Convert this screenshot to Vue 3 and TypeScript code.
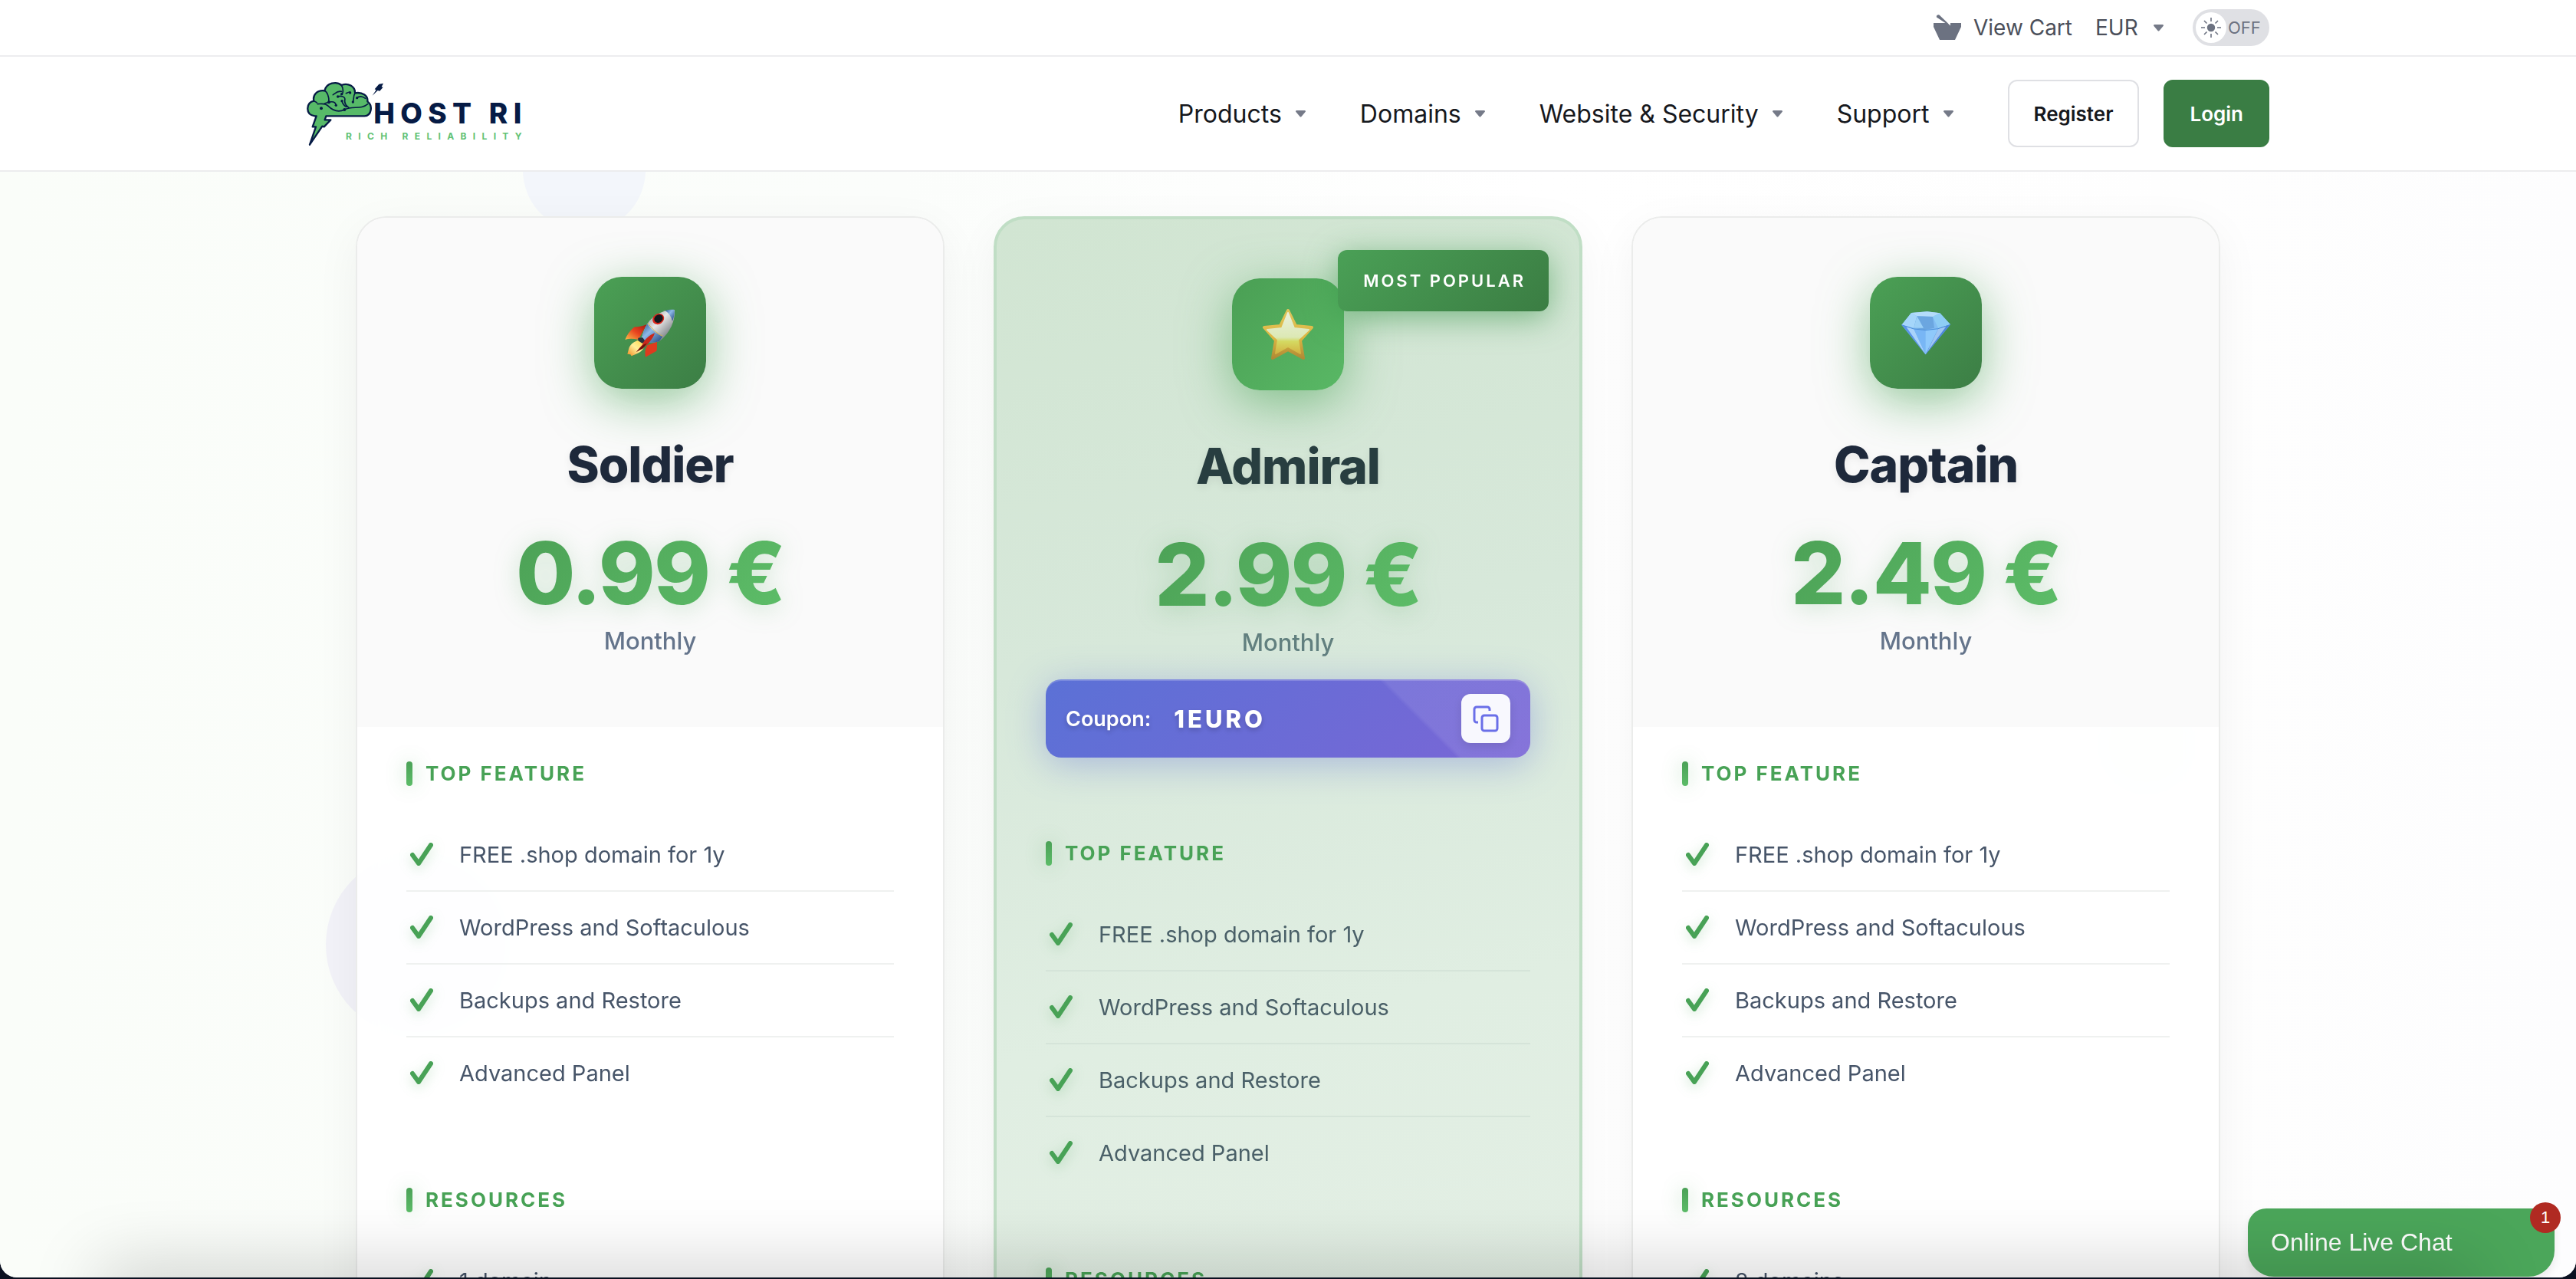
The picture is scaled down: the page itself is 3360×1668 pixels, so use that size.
<script setup lang="ts">
import { ref } from 'vue'

interface Plan {
  name: string
  price: string
  icon: 'rocket' | 'star' | 'diamond'
  featured?: boolean
  coupon?: string
  sections: { title: string; items: string[] }[]
}

const perks = ['FREE .shop domain for 1y', 'WordPress and Softaculous', 'Backups and Restore', 'Advanced Panel']

const menu = ['Products', 'Domains', 'Website & Security', 'Support']

const plans: Plan[] = [
  {
    name: 'Soldier',
    price: '0.99 €',
    icon: 'rocket',
    sections: [
      { title: 'Top Feature', items: perks },
      { title: 'Resources', items: ['1 domain'] },
    ],
  },
  {
    name: 'Admiral',
    price: '2.99 €',
    icon: 'star',
    featured: true,
    coupon: '1EURO',
    sections: [
      { title: 'Top Feature', items: perks },
      { title: 'Resources', items: [] },
    ],
  },
  {
    name: 'Captain',
    price: '2.49 €',
    icon: 'diamond',
    sections: [
      { title: 'Top Feature', items: perks },
      { title: 'Resources', items: ['2 domains'] },
    ],
  },
]

const currency = ref('EUR')
const dark = ref(false)

function copyCoupon(code: string) {
  navigator.clipboard?.writeText(code)
}
</script>

<template>
  <div class="frame">
    <div class="page">
      <div class="topbar">
        <div class="container topbar-row">
          <a href="#" class="cart">
            <svg width="36" height="34" viewBox="0 0 36 34" aria-hidden="true">
              <path d="M0 11h15.500L4 3.500A2.500 2.500 0 0 1 7.500 .5L22 14.500V11h14v5l-8 17H8L0 16z" fill="#6c7281" />
            </svg>
            <span>View Cart</span>
          </a>
          <label class="currency">
            <select v-model="currency" aria-label="Currency">
              <option>EUR</option>
            </select>
            <svg class="caret" width="13" height="9" viewBox="0 0 13 9" aria-hidden="true"><path d="M1 0h11q1 0 1 1.500L7.500 8q-1 1-2 0L0 1.500Q0 0 1 0z" /></svg>
          </label>
          <label class="toggle">
            <input v-model="dark" type="checkbox" aria-label="Dark mode" />
            <span class="knob">
              <svg width="26" height="26" viewBox="0 0 26 26" aria-hidden="true">
                <circle cx="13" cy="13" r="5.200" fill="#6c7281" />
                <path d="M13 0v5M13 21v5M0 13h5M21 13h5M4 4l3.500 3.500M18.500 18.500 22 22M4 22l3.500-3.500M18.500 7.500 22 4" stroke="#6c7281" stroke-width="1.600" />
              </svg>
            </span>
            <span>OFF</span>
          </label>
        </div>
      </div>

      <header class="navbar">
        <div class="container nav-row">
          <a href="#" class="logo" aria-label="Host RI">
            <svg width="290" height="87" viewBox="60 42 870 261">
              <g stroke="#061b45" stroke-width="7" stroke-linejoin="round" stroke-linecap="round">
                <path d="M92 181C70 178 63 165 64 150C65 133 74 125 88 122C83 98 101 78 130 82C137 50 177 44 196 60C222 50 250 64 249 91C277 86 301 101 298 124C320 140 314 180 286 181H136L131 196H154L128 223L121 221L72 293L96 223H83L98 181Z" fill="#57ba68" />
                <g fill="none" stroke-width="5">
                  <path d="M88 122C94 124 97 125 100 129M130 82C140 86 148 105 147 126M103 134C118 133 132 130 142 140C160 158 181 170 208 156C240 139 272 158 299 134" />
                  <path d="M130 132C146 126 172 118 175 139M163 98C172 92 180 82 196 85M182 105C197 100 213 106 209 120C208 131 215 141 225 148M196 60C203 72 205 90 197 96M214 92C224 88 232 84 230 90M249 91C241 105 246 115 241 126M256 110C265 103 278 103 290 112M198 122C202 137 208 141 215 145" />
                </g>
              </g>
              <g fill="#061b45">
                <circle cx="117" cy="151" r="6" /><circle cx="147" cy="127" r="6" /><circle cx="175" cy="139" r="5" />
                <circle cx="182" cy="105" r="5" /><circle cx="198" cy="122" r="5" /><circle cx="230" cy="90" r="5" />
                <circle cx="241" cy="126" r="5" /><circle cx="257" cy="110" r="5" /><circle cx="208" cy="156" r="6" /><circle cx="197" cy="95" r="5" />
                <path d="M343 56l17-3-7 14 6 1-13 15-8-2-21 20 15-22-6-3z" />
              </g>
              <text x="322" y="210" font-size="111" font-weight="800" letter-spacing="22" fill="#061b45">HOST RI</text>
              <text x="213" y="273" font-size="36" font-weight="700" letter-spacing="25" fill="#62c274">RICH RELIABILITY</text>
            </svg>
          </a>
          <div class="nav-right">
            <nav class="menu">
              <button v-for="item in menu" :key="item" type="button" class="menu-item" aria-haspopup="true">
                {{ item }}
                <svg class="caret" width="13" height="9" viewBox="0 0 13 9" aria-hidden="true"><path d="M1 0h11q1 0 1 1.500L7.500 8q-1 1-2 0L0 1.500Q0 0 1 0z" /></svg>
              </button>
            </nav>
            <div class="auth">
              <button type="button" class="btn btn-outline">Register</button>
              <button type="button" class="btn btn-solid">Login</button>
            </div>
          </div>
        </div>
      </header>

      <main class="hero">
        <div class="container plans">
          <span class="bubble bubble-blue"></span>
          <span class="bubble bubble-violet"></span>
          <span class="bubble bubble-green"></span>
          <article v-for="plan in plans" :key="plan.name" class="card" :class="{ featured: plan.featured }">
            <span v-if="plan.featured" class="ribbon">MOST POPULAR</span>
            <div class="card-head">
              <div class="tile">
                <svg v-if="plan.icon === 'rocket'" width="70" height="65" viewBox="40 35 210 195" aria-hidden="true">
                  <defs>
                    <linearGradient id="hull" x1="0" y1="0" x2="1" y2="1">
                      <stop offset=".15" stop-color="#8d949d" /><stop offset=".45" stop-color="#e6e6e6" /><stop offset=".75" stop-color="#8b8f94" /><stop offset="1" stop-color="#444b55" />
                    </linearGradient>
                    <linearGradient id="band" x1="0" y1="0" x2="1" y2="1">
                      <stop offset="0" stop-color="#2c5792" /><stop offset=".4" stop-color="#8db9e8" /><stop offset="1" stop-color="#1d3f78" />
                    </linearGradient>
                    <linearGradient id="fin" x1="1" y1="0" x2="0" y2="1">
                      <stop offset="0" stop-color="#a51a12" /><stop offset=".5" stop-color="#e8431f" /><stop offset="1" stop-color="#fbc04a" />
                    </linearGradient>
                    <linearGradient id="flame" x1="1" y1="0" x2="0" y2="1">
                      <stop offset="0" stop-color="#ffd43a" /><stop offset=".5" stop-color="#fff09a" /><stop offset="1" stop-color="#f08a1d" />
                    </linearGradient>
                  </defs>
                  <path d="M132 98C112 108 96 106 82 109C66 122 54 140 47 158C62 153 80 154 99 158Z" fill="url(#fin)" />
                  <path d="M172 166C171 180 173 192 170 202L127 226C124 210 124 198 134 180Z" fill="#df3a1e" />
                  <path d="M100 160C84 164 66 176 62 192L56 214L68 216L72 222L90 214C108 208 120 196 125 176Z" fill="url(#flame)" />
                  <path d="M134 96C156 62 196 40 240 41C244 80 226 130 180 165C160 170 140 172 122 168L112 152C116 134 124 112 134 96Z" fill="url(#hull)" />
                  <path d="M134 96C124 112 116 134 112 152L122 168C142 172 160 170 180 165L194 146C170 136 148 116 134 96Z" fill="url(#band)" />
                  <path d="M204 44C216 41 230 40 240 41C242 56 238 72 232 86C228 68 218 54 204 44Z" fill="url(#band)" />
                  <path d="M136 92C150 114 172 134 194 144" fill="none" stroke="#d2ad45" stroke-width="3" />
                  <ellipse cx="177" cy="77" rx="24" ry="20" transform="rotate(-35 177 77)" fill="#d9261c" />
                  <ellipse cx="178" cy="76" rx="18" ry="15" transform="rotate(-35 178 76)" fill="#14171d" />
                  <path d="M98 151L116 150L126 164L114 172L98 162Z" fill="#26313f" />
                  <path d="M163 132C142 140 122 158 114 178L91 206C108 194 130 186 142 168C152 156 160 144 163 132Z" fill="#c8281b" />
                  <path d="M91 206C104 190 116 176 132 172L118 192Z" fill="#6b100d" />
                </svg>
                <svg v-else-if="plan.icon === 'star'" width="70" height="66" viewBox="0 0 70 66" aria-hidden="true">
                  <defs>
                    <linearGradient id="gold" x1="0" y1="0" x2="0" y2="1">
                      <stop offset="0" stop-color="#dcc45c" /><stop offset=".55" stop-color="#dfb843" /><stop offset="1" stop-color="#b08a35" />
                    </linearGradient>
                    <linearGradient id="shine" x1="0" y1="0" x2="0" y2="1">
                      <stop offset="0" stop-color="#e9f0dc" /><stop offset=".6" stop-color="#dce8b4" /><stop offset=".7" stop-color="#d4da62" /><stop offset="1" stop-color="#d3b241" />
                    </linearGradient>
                  </defs>
                  <path d="M35 2L45 22L66 24L51 41L55 64L35 53L15 64L19 41L4 24L25 22Z" fill="url(#gold)" stroke="url(#gold)" stroke-width="4" stroke-linejoin="round" />
                  <path d="M35 5L43 25L62 27L48 40L51 58L35 49L19 58L22 40L8 27L27 25Z" fill="url(#shine)" stroke="url(#shine)" stroke-width="2" stroke-linejoin="round" />
                </svg>
                <svg v-else width="70" height="65" viewBox="38 35 210 195" aria-hidden="true">
                  <path d="M48 100L86 53L148 48L198 54L239 99L142 216Z" fill="#82bdf3" />
                  <path d="M86 53L148 48L198 54L170 68L108 66Z" fill="#b4dcfa" />
                  <path d="M48 100L86 53L108 66L96 112Z" fill="#a5d6fa" />
                  <path d="M108 66L170 68L176 112L138 120L96 112Z" fill="#6ba6e0" />
                  <path d="M108 66L134 112L96 112Z" fill="#9bd0f7" />
                  <path d="M198 54L239 99L192 114L170 68Z" fill="#8ecdf5" />
                  <path d="M48 100L96 116L142 216Z" fill="#5a94ea" />
                  <path d="M66 108L96 116L142 216Z" fill="#a9d3fa" />
                  <path d="M96 116L142 121L142 216Z" fill="#78b6f5" />
                  <path d="M142 121L192 114L142 216Z" fill="#8fc9fb" />
                  <path d="M192 114L239 99L142 216Z" fill="#4b86dd" />
                  <path d="M192 114L222 107L148 206Z" fill="#9fc6f2" />
                  <path d="M48 100Q142 142 239 99" fill="none" stroke="#4d8fd9" stroke-width="3" />
                </svg>
              </div>
              <h2 class="plan-name">{{ plan.name }}</h2>
              <p class="price">{{ plan.price }}</p>
              <p class="period">Monthly</p>
              <div v-if="plan.coupon" class="coupon">
                <span class="coupon-label">Coupon:</span>
                <strong class="coupon-code">{{ plan.coupon }}</strong>
                <button type="button" class="copy" aria-label="Copy coupon" @click="copyCoupon(plan.coupon)">
                  <svg width="36" height="36" viewBox="0 0 36 36" fill="none" stroke="#6a6fe8" stroke-width="3" aria-hidden="true">
                    <rect x="13" y="14" width="20" height="20" rx="3" />
                    <path d="M8 23H6a3 3 0 0 1-3-3V6a3 3 0 0 1 3-3h14a3 3 0 0 1 3 3v2" />
                  </svg>
                </button>
              </div>
            </div>
            <div class="card-body">
              <section v-for="section in plan.sections" :key="section.title" class="group">
                <h3 class="group-title">{{ section.title }}</h3>
                <ul class="features">
                  <li v-for="item in section.items" :key="item">
                    <svg class="tick" width="36" height="36" viewBox="0 0 36 36" aria-hidden="true">
                      <path d="M5 18L13 29L29 5" fill="none" stroke="#48a256" stroke-width="6" stroke-linecap="round" stroke-linejoin="round" />
                    </svg>
                    <span>{{ item }}</span>
                  </li>
                </ul>
              </section>
            </div>
          </article>
        </div>
      </main>

      <button type="button" class="chat">
        Online Live Chat
        <span class="unread">1</span>
      </button>
      <div class="shade"></div>
    </div>
  </div>
</template>

<style>
body {
  margin: 0;
  overflow: hidden;
}
</style>

<style scoped>
* {
  box-sizing: border-box;
}
.frame {
  height: 100vh;
  padding-bottom: 2px;
  background: #0a1020;
  font-family: Inter, "Liberation Sans", sans-serif;
}
.page {
  position: relative;
  height: 100%;
  overflow: hidden;
  border-radius: 0 0 22px 22px;
  background: #fff;
}
.container {
  max-width: 2560px;
  margin: 0 auto;
}
button {
  font-family: inherit;
  cursor: pointer;
}
a {
  color: inherit;
  text-decoration: none;
}
.caret {
  fill: #757a88;
}

.topbar {
  border-bottom: 2px solid #ededef;
}
.topbar-row {
  display: flex;
  align-items: center;
  justify-content: flex-end;
  height: 72px;
  font-size: 28px;
  color: #4b4f5a;
}
.cart {
  display: flex;
  align-items: center;
  gap: 16px;
  margin-right: 30px;
}
.currency {
  display: flex;
  align-items: center;
  gap: 20px;
  margin-right: 38px;
}
.currency select {
  appearance: none;
  padding: 0;
  border: 0;
  background: none;
  font: inherit;
  color: inherit;
}
.toggle {
  position: relative;
  display: flex;
  align-items: center;
  gap: 2px;
  width: 100px;
  height: 48px;
  padding: 4px;
  border-radius: 24px;
  background: #dfe0e4;
  font-size: 22px;
  color: #6c7281;
}
.toggle input {
  position: absolute;
  inset: 0;
  margin: 0;
  opacity: 0;
}
.knob {
  display: flex;
  align-items: center;
  justify-content: center;
  width: 40px;
  height: 40px;
  border-radius: 50%;
  background: #fff;
}

.navbar {
  border-bottom: 2px solid #ececee;
}
.nav-row {
  display: flex;
  align-items: center;
  justify-content: space-between;
  height: 148px;
}
.logo svg {
  display: block;
}
.nav-right {
  display: flex;
  align-items: center;
  gap: 71px;
}
.menu {
  display: flex;
  gap: 71px;
}
.menu-item {
  display: flex;
  align-items: center;
  gap: 18px;
  padding: 0;
  border: 0;
  background: none;
  font-size: 32px;
  color: #16181d;
}
.auth {
  display: flex;
  gap: 32px;
}
.btn {
  height: 88px;
  padding: 0 32px;
  border: 2px solid #dfe0e4;
  border-radius: 12px;
  font-size: 26px;
  font-weight: 600;
}
.btn-outline {
  background: #fff;
  color: #16181d;
}
.btn-solid {
  border-color: #3a7d44;
  background: #3a7d44;
  color: #fff;
}

.hero {
  padding-top: 58px;
  background: linear-gradient(90deg, #fafdf9 0%, #fbfdfb 35%, #fff 60%, #fefefe 85%, #fdfdfe 100%);
}
.plans {
  position: relative;
  display: grid;
  grid-template-columns: repeat(3, 1fr);
  gap: 64px;
  align-items: start;
  padding: 0 64px;
}
.bubble {
  position: absolute;
  border-radius: 50%;
}
.bubble-blue {
  top: -140px;
  left: 282px;
  width: 160px;
  height: 160px;
  background: #f3f6fb;
  clip-path: inset(82px 0 0 0);
}
.bubble-violet {
  top: 830px;
  left: 25px;
  width: 240px;
  height: 240px;
  background: #f2f2f8;
}
.bubble-green {
  top: 610px;
  left: 2320px;
  width: 160px;
  height: 160px;
  background: #f4fbf6;
}
.card {
  position: relative;
  min-width: 0;
  overflow: hidden;
  border: 2px solid #ebeceb;
  border-radius: 40px;
  background: rgba(255, 255, 255, 0.9);
  backdrop-filter: blur(20px);
  box-shadow: 0 16px 60px rgba(20, 40, 20, 0.05);
}
.card-head {
  display: flex;
  flex-direction: column;
  align-items: center;
  padding: 77px 64px 64px;
  background: rgba(249, 249, 249, 0.85);
}
.featured {
  border: 4px solid #c0dec5;
  background: linear-gradient(170deg, #d1e5d2 0%, #d7e8da 35%, #e0eee2 65%, #e4efe5 100%);
}
.featured .card-head {
  background: none;
}
.ribbon {
  position: absolute;
  z-index: 1;
  top: 40px;
  right: 40px;
  padding: 0 30px 0 33px;
  border-radius: 12px;
  background: linear-gradient(135deg, #4aa056, #3b7d43);
  box-shadow: 0 8px 40px rgba(58, 150, 75, 0.6);
  font-size: 22px;
  font-weight: 600;
  line-height: 80px;
  letter-spacing: 3px;
  color: #fff;
}
.tile {
  display: flex;
  align-items: center;
  justify-content: center;
  width: 146px;
  height: 146px;
  margin-bottom: 60px;
  border-radius: 36px;
  background: linear-gradient(135deg, #4ba055, #3c7e45);
  box-shadow: 0 16px 64px rgba(76, 165, 88, 0.6);
}
.featured .tile {
  background: linear-gradient(135deg, #4a9f54, #59b865);
}
.plan-name {
  margin: 0 0 46px;
  font-size: 64px;
  font-weight: 800;
  line-height: 78px;
  letter-spacing: -1px;
  color: #1e293b;
  text-shadow: 0 4px 12px rgba(0, 0, 0, 0.07);
}
.featured .plan-name {
  color: #283e40;
}
.price {
  margin: 0 0 13px;
  background: linear-gradient(135deg, #4ca156, #5dbd68);
  -webkit-background-clip: text;
  background-clip: text;
  filter: drop-shadow(0 4px 16px rgba(76, 165, 88, 0.25));
  font-size: 112px;
  font-weight: 800;
  line-height: 112px;
  letter-spacing: -2px;
  color: transparent;
}
.period {
  margin: 0 0 28px;
  font-size: 31px;
  font-weight: 500;
  line-height: 40px;
  color: #64748b;
}
.featured .period {
  color: #62807f;
}
.coupon {
  display: flex;
  align-items: center;
  align-self: stretch;
  height: 102px;
  padding: 0 26px;
  border-radius: 20px;
  background:
    linear-gradient(45deg, transparent 73%, rgba(255, 255, 255, 0.09) 74%),
    linear-gradient(135deg, #5b71d6, #7a66d6);
  box-shadow: inset 0 2px 0 rgba(255, 255, 255, 0.18), 0 8px 48px rgba(95, 110, 214, 0.4);
  color: #fff;
  text-shadow: 0 3px 6px rgba(0, 0, 0, 0.2);
}
.coupon-label {
  font-size: 27px;
  font-weight: 600;
}
.coupon-code {
  margin-left: 30px;
  font-size: 31px;
  font-weight: 800;
  letter-spacing: 4px;
}
.copy {
  display: flex;
  align-items: center;
  justify-content: center;
  width: 64px;
  height: 64px;
  margin-left: auto;
  padding: 0;
  border: 0;
  border-radius: 12px;
  background: #f8f8fe;
  box-shadow: 0 4px 12px rgba(0, 0, 0, 0.1);
}

.card-body {
  padding: 44px 64px 64px;
}
.group {
  margin-bottom: 102px;
}
.group-title {
  display: flex;
  align-items: center;
  gap: 17px;
  margin: 0 0 42px;
  font-size: 26px;
  font-weight: 700;
  line-height: 34px;
  letter-spacing: 3px;
  text-transform: uppercase;
  color: #48a256;
}
.group-title::before {
  content: "";
  width: 8px;
  height: 32px;
  border-radius: 4px;
  background: linear-gradient(#4ba157, #5cbc68);
  box-shadow: 0 0 24px rgba(76, 165, 88, 0.35);
}
.features {
  margin: 0;
  padding: 0;
  list-style: none;
}
.features li {
  display: flex;
  align-items: center;
  gap: 30px;
  height: 95px;
  padding-left: 3px;
  border-bottom: 2px solid #eff1f0;
  font-size: 29px;
  color: #475569;
}
.features li:last-child {
  height: 93px;
  border-bottom: 0;
}
.featured .features li {
  border-color: #d5e4d9;
  color: #4a6068;
}
.tick {
  filter: drop-shadow(0 4px 8px rgba(76, 165, 88, 0.3));
}

.shade {
  position: absolute;
  bottom: -40px;
  left: 140px;
  right: 140px;
  height: 40px;
  box-shadow: 0 0 90px 10px rgba(0, 0, 0, 0.22);
  pointer-events: none;
}
.chat {
  position: absolute;
  right: 28px;
  bottom: 1px;
  width: 400px;
  height: 89px;
  padding: 0 30px;
  border: 0;
  border-radius: 24px 24px 34px 34px;
  background: #4ba65a;
  box-shadow: 0 6px 12px rgba(0, 0, 0, 0.08);
  font-family: "Liberation Sans", Arial, sans-serif;
  font-size: 32px;
  text-align: left;
  color: #fff;
}
.unread {
  position: absolute;
  top: -8px;
  right: -8px;
  width: 40px;
  border-radius: 20px;
  background: #b02a22;
  font-size: 22px;
  line-height: 40px;
  text-align: center;
}
</style>
